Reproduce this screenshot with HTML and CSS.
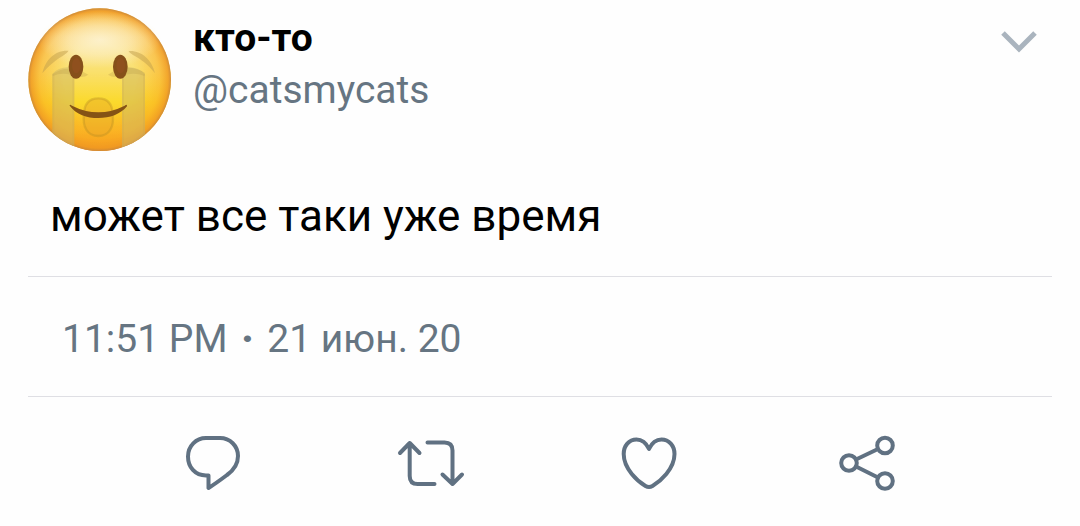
FILE: index.html
```
<!DOCTYPE html>
<html lang="ru">
	<head>
		<meta charset="UTF-8">
		<meta name="viewport" content="width=device-width, initial-scale=1">
		<title>кто-то (@catsmycats)</title>
		<link rel="stylesheet" href="styles.css">
	</head>
	<body>
		<article class="tweet">
			<header class="tweet-header">
				<svg class="avatar" viewBox="24 24 432 432" aria-hidden="true">
					<defs>
						<linearGradient id="face" x1="0" y1="0" x2="0" y2="1">
							<stop offset="0" stop-color="#f8d173"/>
							<stop offset=".2" stop-color="#fae5a0"/>
							<stop offset=".45" stop-color="#fae06c"/>
							<stop offset=".66" stop-color="#fbd92c"/>
							<stop offset=".86" stop-color="#fbb929"/>
							<stop offset="1" stop-color="#f3901f"/>
						</linearGradient>
						<radialGradient id="rim" cx=".5" cy=".5" r=".5">
							<stop offset=".5" stop-color="#fbb21c" stop-opacity="0"/>
							<stop offset=".84" stop-color="#f9a91e" stop-opacity=".5"/>
							<stop offset=".96" stop-color="#f09a22" stop-opacity=".85"/>
							<stop offset="1" stop-color="#cf8a38"/>
						</radialGradient>
						<radialGradient id="shine">
							<stop offset="0" stop-color="#fdf3d4" stop-opacity=".85"/>
							<stop offset=".5" stop-color="#fdf1c8" stop-opacity=".55"/>
							<stop offset="1" stop-color="#fdf0c0" stop-opacity="0"/>
						</radialGradient>
						<clipPath id="head"><circle cx="239" cy="239" r="214"/></clipPath>
					</defs>
					<circle cx="239" cy="239" r="214" fill="url(#face)"/>
					<circle cx="239" cy="239" r="214" fill="url(#rim)"/>
					<ellipse cx="239" cy="120" rx="185" ry="85" fill="url(#shine)"/>
					<g clip-path="url(#head)">
						<!-- tears -->
						<path d="M97 222Q120 196 163 204V460H97ZM306 204Q350 196 375 222V460H306Z" fill="#cdb768" opacity=".5"/>
						<path d="M100 222V460M160 206V460M309 206V460M372 222V460" stroke="#c0a047" stroke-width="6" opacity=".18"/>
						<path d="M98 222Q145 190 205 224Q190 236 163 228Q130 214 98 228ZM264 224Q320 185 374 218V228Q340 214 306 228Q280 236 264 224Z" fill="#c0a34c" opacity=".35"/>
						<!-- brows -->
						<path d="M67 220C75 182 103 150 145 152C142 164 105 174 67 220ZM405 220C396 178 362 150 326 153C330 166 370 172 405 220Z" fill="#c29f4c" opacity=".5"/>
						<!-- open mouth -->
						<path d="M192 345C192 312 207 295 235 295S278 312 278 345C283 380 268 408 235 408S187 380 192 345Z" fill="#e5a629" fill-opacity=".4" stroke="#b58b22" stroke-opacity=".35" stroke-width="7"/>
					</g>
					<ellipse cx="168" cy="200" rx="22" ry="36" fill="#86501a"/>
					<ellipse cx="169" cy="197" rx="13" ry="23" fill="#8f501e"/>
					<ellipse cx="301" cy="200" rx="22" ry="36" fill="#86501a"/>
					<ellipse cx="302" cy="197" rx="13" ry="23" fill="#8f501e"/>
					<path d="M149 317Q148 311 156 317Q235 357 314 317Q322 311 321 319C300 344 270 354 235 354S169 344 149 317Z" fill="#855315"/>
				</svg>
				<div class="author">
					<strong class="name">кто-то</strong>
					<a class="handle" href="#">@catsmycats</a>
				</div>
				<button class="more" type="button" aria-label="Ещё">
					<svg viewBox="0 0 40 40"><path d="M4 11 20 27 36 11"/></svg>
				</button>
			</header>

			<p class="text">может все таки уже время</p>

			<div class="date"><time datetime="2020-06-21T23:51">11:51 PM <span class="dot">·</span> 21 июн. 20</time></div>

			<div class="actions">
				<button class="action" type="button" aria-label="Ответить">
					<svg viewBox="0 0 72 72"><path d="M29 11H43C53 11 61 19 61 29C61 37 57 43 50 48C44 52.500 38 57 31.500 61V48.500H29C18 48.500 11 40 11 29.500S19 11 29 11Z"/></svg>
				</button>
				<button class="action" type="button" aria-label="Ретвитнуть">
					<svg viewBox="0 0 72 72"><path d="M5 26 14.700 16 24.500 26M14.700 16V49Q14.700 57 22.700 57H39.500M32.500 15.500H49.500Q57.500 15.500 57.500 23.500V57M47.500 47.500 57.500 57 67 47.500"/></svg>
				</button>
				<button class="action" type="button" aria-label="Нравится">
					<svg viewBox="0 0 72 72"><path d="M36 22C33 15.500 28.500 12.500 23.500 12.500C16 12.500 10.700 18.500 10.700 27C10.700 42 25 54.500 32.500 59Q36 61 39.500 59C47 54.500 61.500 42 61.500 27C61.500 18.500 56 12.500 48.500 12.500C43.500 12.500 39 15.500 36 22Z"/></svg>
				</button>
				<button class="action" type="button" aria-label="Поделиться">
					<svg viewBox="0 0 72 72"><circle cx="18" cy="36" r="7.800"/><circle cx="54" cy="18.500" r="7.800"/><circle cx="54" cy="54" r="7.800"/><path d="M25 32.500 47 22M25 39.500 47 50.500"/></svg>
				</button>
			</div>
		</article>
	</body>
</html>
```
FILE: styles.css
```
* {
	margin: 0;
	padding: 0;
	box-sizing: border-box;
}

body {
	background: #fefefe;
	color: #000;
	font-family: Roboto, "Noto Sans", sans-serif;
}

button {
	border: none;
	background: none;
	cursor: pointer;
}

svg {
	display: block;
}

.tweet {
	padding: 8px 28px 0;
}

.tweet-header {
	display: flex;
	align-items: flex-start;
}

.avatar {
	width: 144px;
	height: 144px;
	flex: none;
}

.author {
	flex: 1;
	display: flex;
	flex-direction: column;
	align-items: flex-start;
	padding: 4px 0 0 21px;
	font-size: 39px;
	line-height: 52px;
}

.name {
	font-weight: 700;
}

.handle {
	color: #667582;
	text-decoration: none;
}

.more {
	margin: 14px 13px 0 0;
}

.more svg {
	width: 40px;
	height: 40px;
	fill: none;
	stroke: #aab4be;
	stroke-width: 5;
}

.text {
	padding: 34px 22px 30px;
	font-size: 44px;
	line-height: 60px;
}

.date {
	padding: 38px 34px 33px;
	border-top: 1px solid #dfdfe4;
	border-bottom: 1px solid #dfdfe4;
	color: #667582;
	font-size: 39px;
	line-height: 48px;
}

.dot {
	margin: 0 4px;
	font-weight: 900;
}

.actions {
	display: grid;
	grid-template-columns: repeat(4, 1fr);
	justify-items: center;
	padding: 30px 76px 24px;
}

.action svg {
	width: 72px;
	height: 72px;
	fill: none;
	stroke: #607182;
	stroke-width: 4;
	stroke-linecap: round;
	stroke-linejoin: round;
}
```
